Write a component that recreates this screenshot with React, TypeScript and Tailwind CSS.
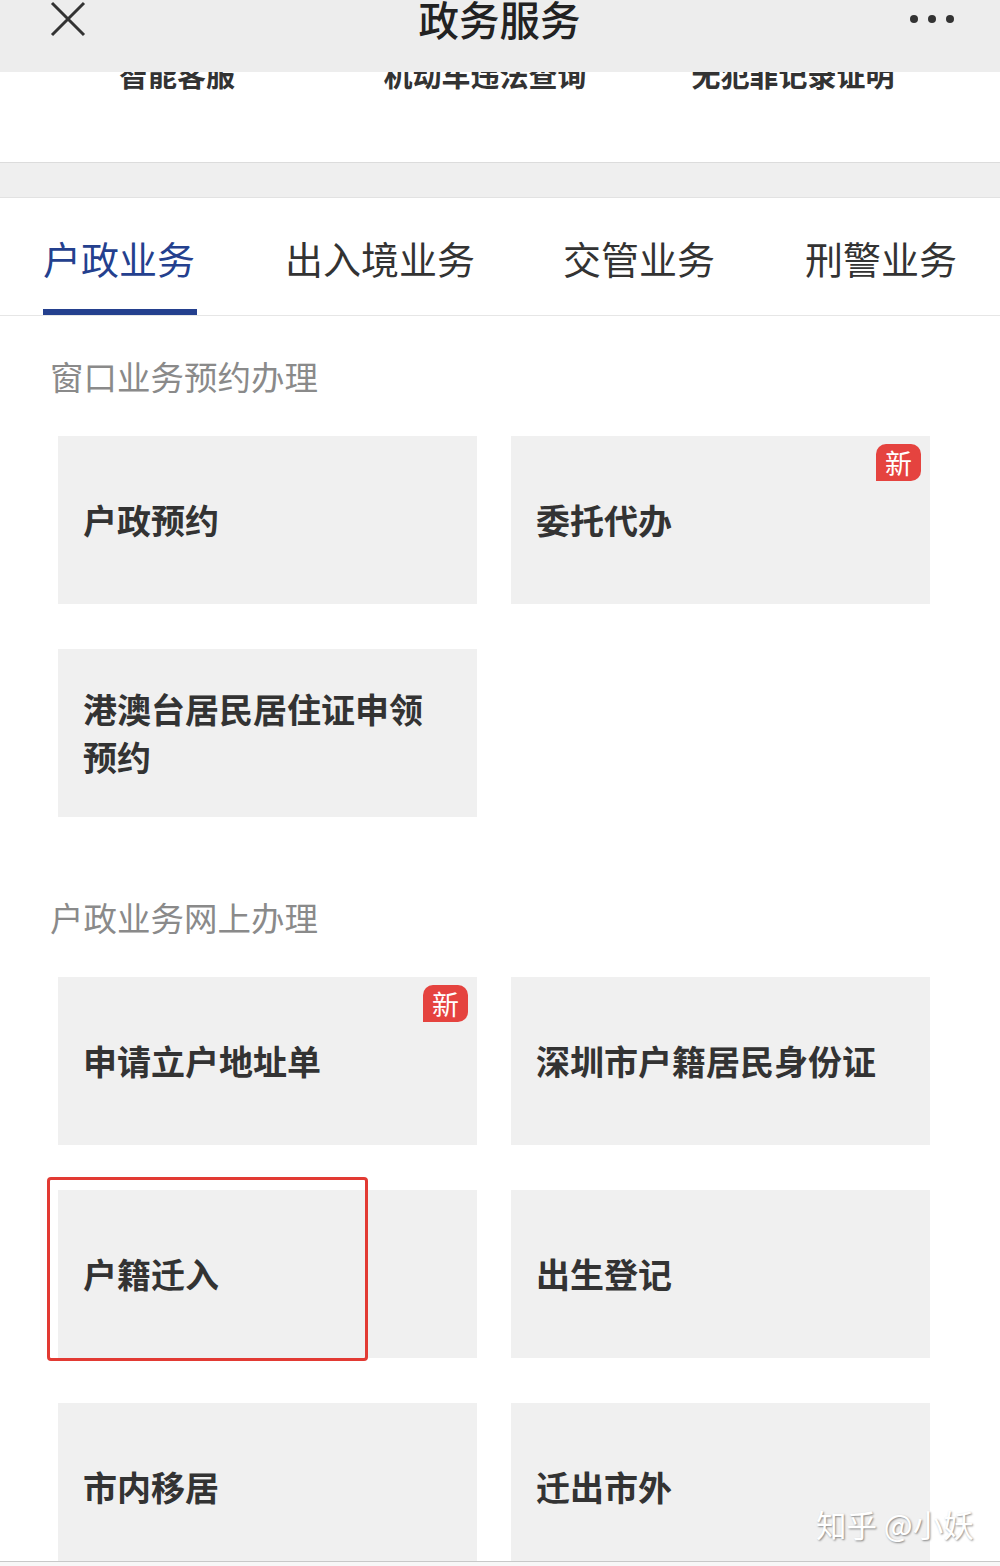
const font = { fontFamily: '"Noto Sans CJK SC", "Noto Sans", sans-serif' };

function Badge() {
  return (
    <div className="absolute top-[8px] right-[9px] w-[45px] h-[37px] bg-[#e5433f] rounded-tl-[10px] rounded-tr-[10px] rounded-br-[10px] flex items-center justify-center text-white text-[27px] leading-none">
      新
    </div>
  );
}

function Card({ title, isNew, marked }: { title: string; isNew?: boolean; marked?: boolean }) {
  return (
    <div className="relative h-[168px] bg-[#f0f0f0] flex items-center pl-[25px] pr-[40px]">
      <p className="text-[34px] leading-[48px] font-bold text-[#333]">{title}</p>
      {isNew && <Badge />}
      {marked && (
        <div className="absolute left-[-11px] top-[-13px] w-[321px] h-[184px] border-[3px] border-[#e23a33] rounded-[4px]" />
      )}
    </div>
  );
}

export default function App() {
  const tabs = ["户政业务", "出入境业务", "交管业务", "刑警业务"];
  const quick = ["智能客服", "机动车违法查询", "无犯罪记录证明"];

  return (
    <main style={font} className="relative w-[1000px] h-[1566px] overflow-hidden bg-[#f7f7f7]">
      {/* top nav */}
      <header className="h-[72px] bg-[#ededed] grid grid-cols-[1fr_auto_1fr] items-start px-[50px] pr-[45px]">
        <svg width="36" height="36" viewBox="0 0 36 36" className="mt-[1px]">
          <path d="M2 2 L34 34 M34 2 L2 34" stroke="#333" strokeWidth="3" fill="none" />
        </svg>
        <h1 className="text-[40.5px] leading-[38px] font-medium text-[#222] -ml-[6px]">政务服务</h1>
        <svg width="46" height="38" viewBox="0 0 46 38" className="justify-self-end">
          <circle cx="5" cy="19" r="4" fill="#333" />
          <circle cx="23" cy="19" r="4" fill="#333" />
          <circle cx="41" cy="19" r="4" fill="#333" />
        </svg>
      </header>

      {/* quick links, partly scrolled under header */}
      <div className="h-[91px] overflow-hidden bg-white border-b border-[#dcdcdc]">
        <div className="grid grid-cols-3 pl-[23px] pr-[53px] -mt-[12px]">
          {quick.map((q) => (
            <p key={q} className="text-center text-[29px] leading-[29px] font-bold text-[#333]">{q}</p>
          ))}
        </div>
      </div>

      <div className="h-[35px] bg-[#efefef] border-b border-[#e2e2e2]" />

      {/* tabs */}
      <nav className="flex pl-[43px] gap-[88px] bg-white border-b border-[#e6e6e6] h-[118px]">
        {tabs.map((t, i) => (
          <div key={t} className="flex flex-col pt-[40px]">
            <span className={`text-[38px] leading-[40px] ${i === 0 ? "text-[#24408e]" : "text-[#333]"}`}>{t}</span>
            <div className={`mt-[31px] h-[6px] w-[154px] ${i === 0 ? "bg-[#24408e]" : "bg-transparent"}`} />
          </div>
        ))}
      </nav>

      <section className="h-[1246px] overflow-hidden bg-white border-b border-[#c8c8c8]">
        <h2 className="pl-[50px] mt-[43px] text-[33.5px] leading-[34px] text-[#8a8a8a]">窗口业务预约办理</h2>
        <div className="grid grid-cols-[419px_419px] gap-x-[34px] gap-y-[45px] pl-[58px] mt-[43px]">
          <Card title="户政预约" />
          <Card title="委托代办" isNew />
          <Card title="港澳台居民居住证申领预约" />
        </div>

        <h2 className="pl-[50px] mt-[83px] text-[33.5px] leading-[34px] text-[#8a8a8a]">户政业务网上办理</h2>
        <div className="grid grid-cols-[419px_419px] gap-x-[34px] gap-y-[45px] pl-[58px] mt-[43px]">
          <Card title="申请立户地址单" isNew />
          <Card title="深圳市户籍居民身份证" />
          <Card title="户籍迁入" marked />
          <Card title="出生登记" />
          <Card title="市内移居" />
          <Card title="迁出市外" />
        </div>
      </section>

      <div className="absolute left-[816px] top-[1506px] text-[30.5px] leading-[36px] text-white [text-shadow:1px_1px_2px_rgba(0,0,0,0.45)]">
        知乎 @小妖
      </div>
    </main>
  );
}
